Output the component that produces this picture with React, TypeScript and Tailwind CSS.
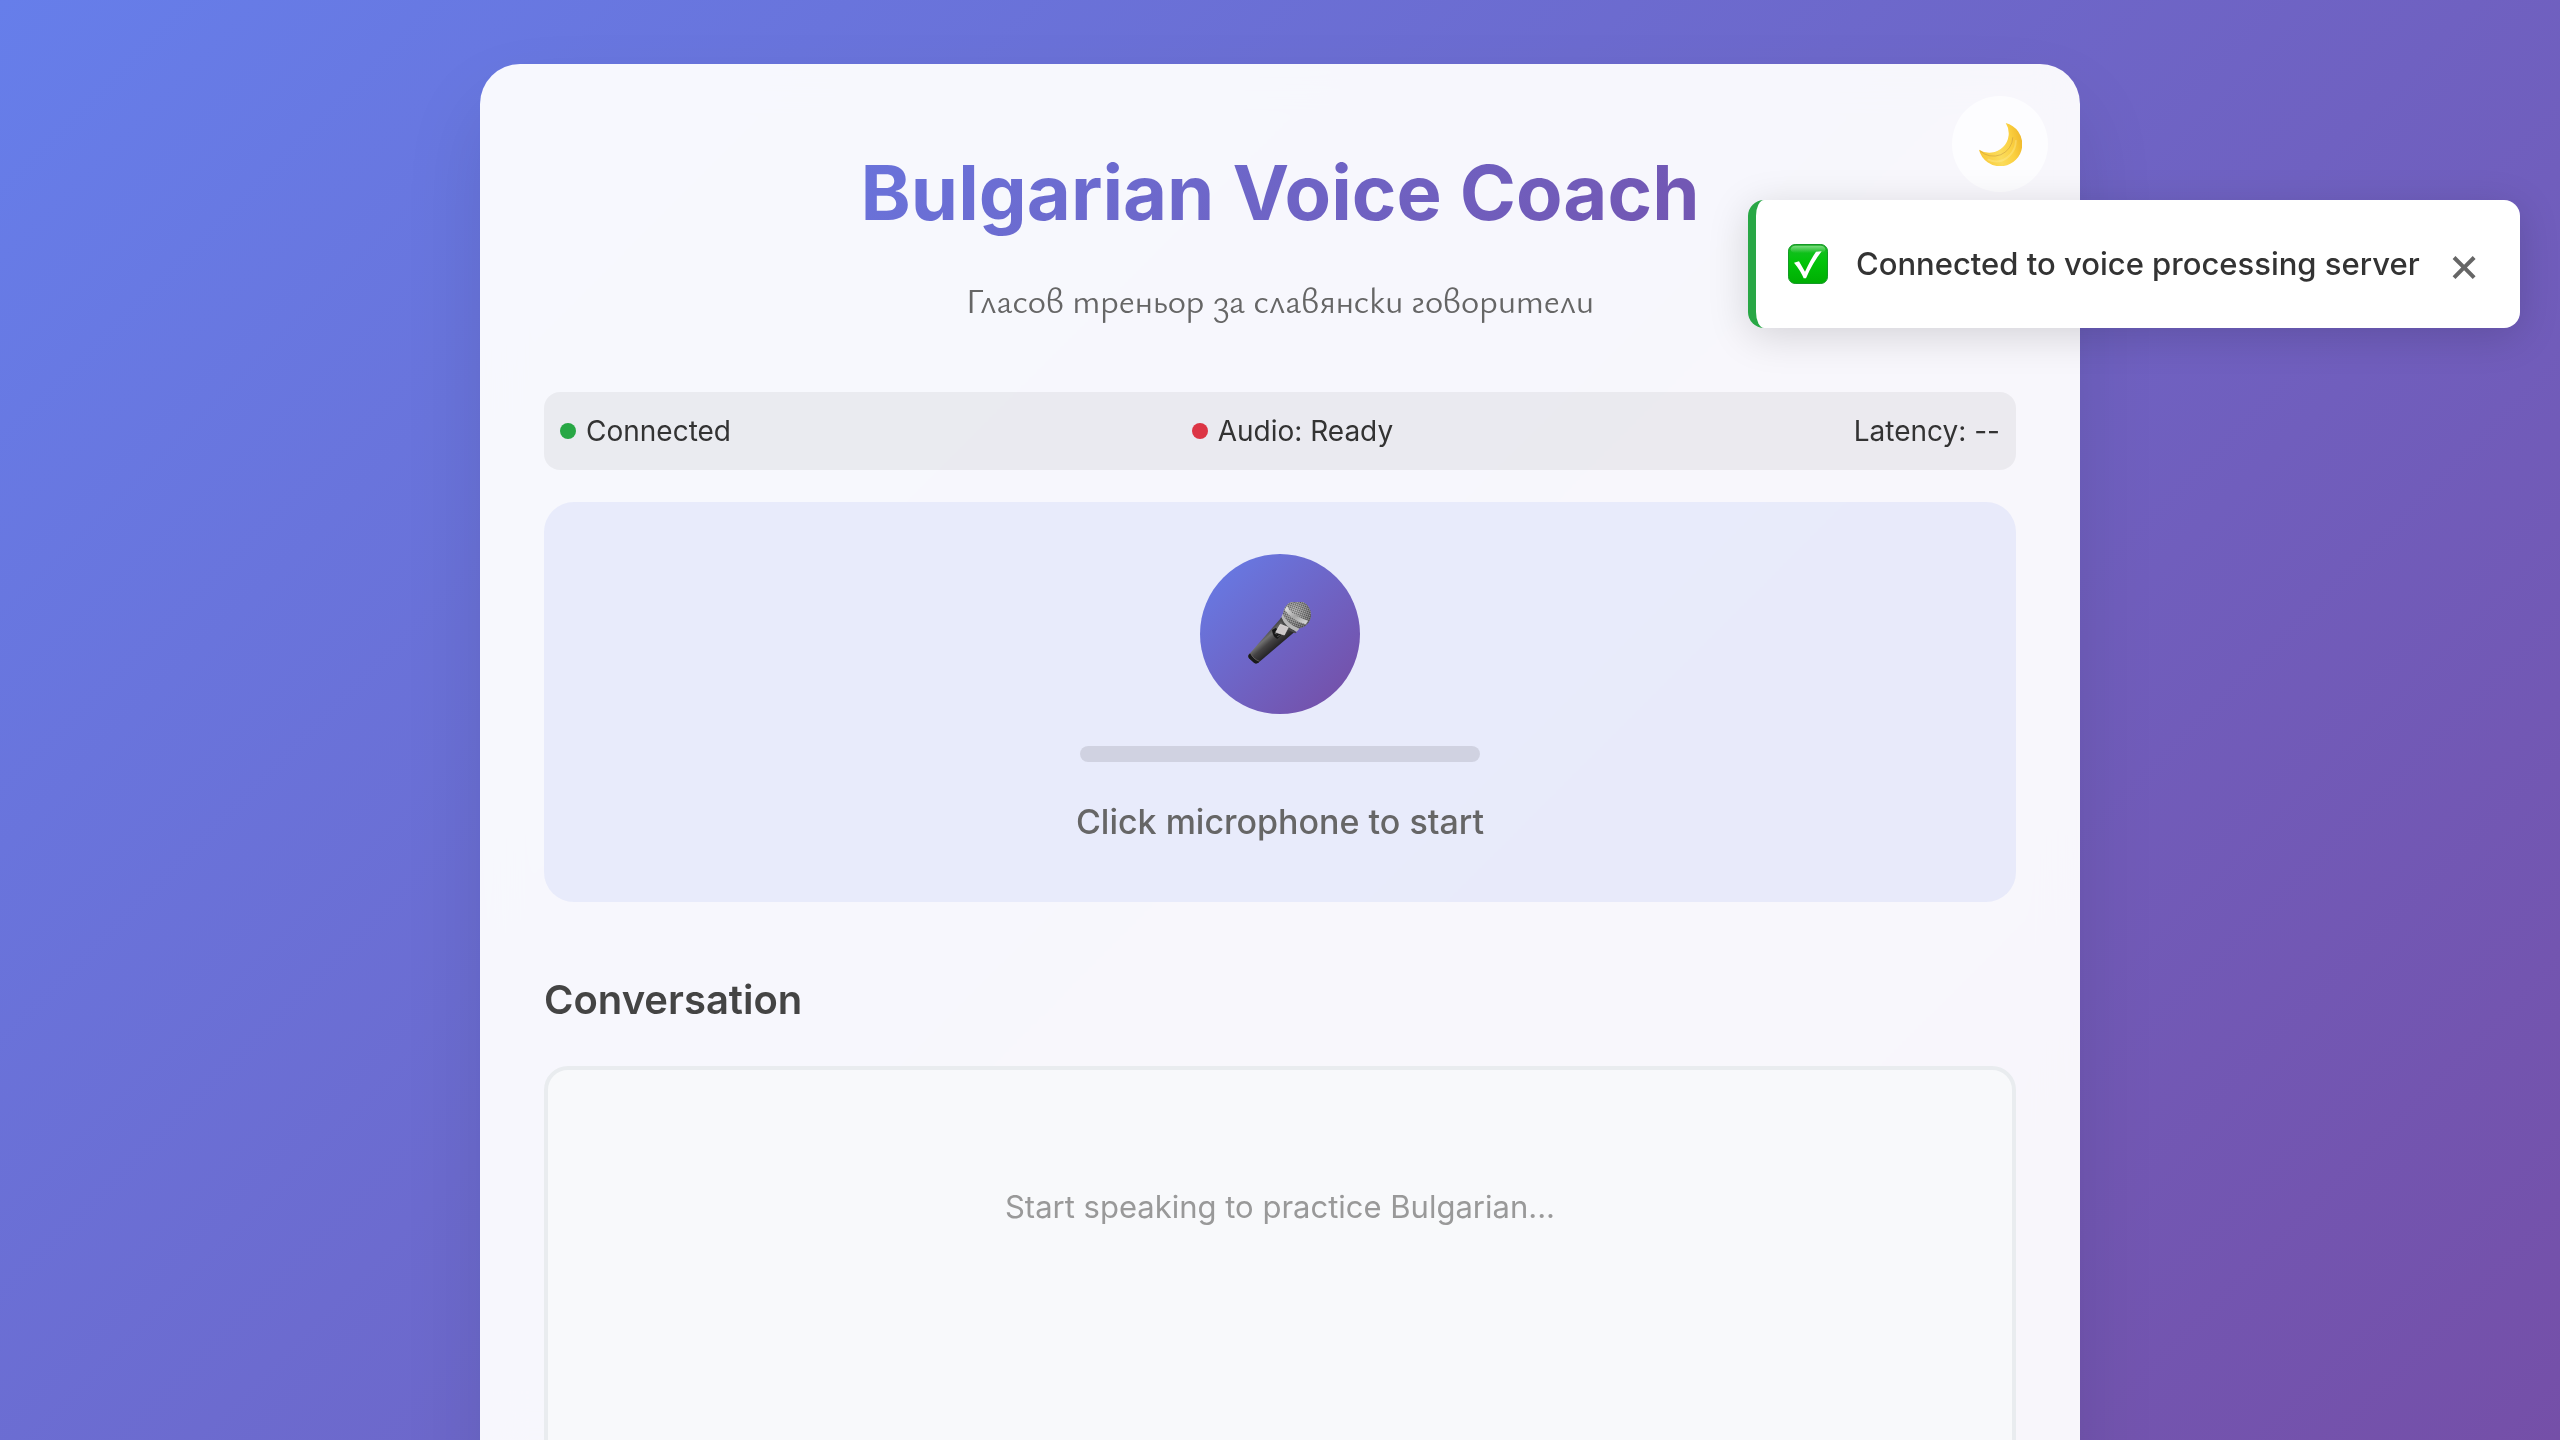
import { useState } from "react";

function MoonIcon() {
  return (
    <svg viewBox="1 1 46 46" className="size-11" aria-hidden="true">
      <defs>
        <linearGradient id="moon-body" x1="0" y1="0.6" x2="1" y2="0.4">
          <stop offset="0" stopColor="#f9c938" />
          <stop offset="0.45" stopColor="#fbdc5c" />
          <stop offset="0.75" stopColor="#fbd040" />
          <stop offset="1" stopColor="#f0b92c" />
        </linearGradient>
      </defs>
      <path d="M30 2 A23 23 0 1 1 2 30 A20.3 20.3 0 0 0 30 2Z" fill="url(#moon-body)" />
      <path d="M3 31 A20.3 20.3 0 0 0 37.400 17" fill="none" stroke="#b98a3c" strokeOpacity="0.45" strokeWidth="1" />
      <path d="M11 40 Q24 46 34 36 Q41 29 40.500 20" fill="none" stroke="#fff0a0" strokeOpacity="0.35" strokeWidth="2" />
    </svg>
  );
}

function MicIcon() {
  return (
    <svg viewBox="24 66 192 192" className="size-16" aria-hidden="true">
      <defs>
        <linearGradient id="mic-handle" gradientUnits="userSpaceOnUse" x1="70" y1="165" x2="104" y2="205">
          <stop offset="0" stopColor="#4a4a4a" />
          <stop offset="0.25" stopColor="#707070" />
          <stop offset="0.55" stopColor="#454344" />
          <stop offset="1" stopColor="#262527" />
        </linearGradient>
        <radialGradient id="mic-head" cx="0.4" cy="0.35" r="0.7">
          <stop offset="0" stopColor="#acacac" />
          <stop offset="0.6" stopColor="#808080" />
          <stop offset="1" stopColor="#5c5c5c" />
        </radialGradient>
        <linearGradient id="mic-band" x1="0" y1="0" x2="1" y2="1">
          <stop offset="0" stopColor="#e8e8e8" />
          <stop offset="0.5" stopColor="#a6a6a6" />
          <stop offset="1" stopColor="#dcdcdc" />
        </linearGradient>
        <pattern id="mic-mesh" width="6" height="6" patternUnits="userSpaceOnUse" patternTransform="rotate(20)">
          <rect width="3" height="3" fill="#333333" fillOpacity="0.65" />
          <rect x="3" y="3" width="3" height="3" fill="#e6e6e6" fillOpacity="0.4" />
        </pattern>
      </defs>
      <path d="M125 112 L26 224 Q23 230 27 235 L43 249 Q48 252 55 248 L166 154Z" fill="url(#mic-handle)" />
      <path d="M26 224 Q23 230 27 235 L43 249 Q48 252 55 248 L59 244 Q40 240 31 219Z" fill="#1a1a1b" />
      <path d="M31 219 Q40 238 59 244" fill="none" stroke="#77716c" strokeWidth="2" />
      <circle cx="171" cy="104" r="42" fill="url(#mic-head)" />
      <circle cx="171" cy="104" r="42" fill="url(#mic-mesh)" />
      <path d="M141 78 Q152 103 190 117 L204 122 L197 133 Q156 121 134 89Z" fill="url(#mic-band)" />
      <path d="M128 101 Q140 131 178 146 L170 155 Q135 142 124 112Z" fill="#b7b7b7" />
      <path d="M124 112 Q134 142 170 157 L166 160 Q130 147 121 117Z" fill="#4a4a4a" />
      <path d="M96 150 L108 143 L124 164 L112 177 Q98 170 96 150Z" fill="#171717" />
      <path d="M121 133 L145 142 L133 165 L107 157Z" fill="#cdc8c9" stroke="#e6e2e2" strokeWidth="2" strokeLinejoin="round" />
      <path d="M104 160 l6 2 M112 170 l7 -4" stroke="#8a8a8a" strokeWidth="2" />
    </svg>
  );
}

function CheckIcon() {
  return (
    <svg viewBox="0 0 120 120" className="size-10 shrink-0" aria-hidden="true">
      <defs>
        <linearGradient id="check-tile" x1="0" y1="0" x2="0" y2="1">
          <stop offset="0" stopColor="#22a92b" />
          <stop offset="0.2" stopColor="#0fc01a" />
          <stop offset="0.45" stopColor="#02c30a" />
          <stop offset="1" stopColor="#00ae03" />
        </linearGradient>
        <linearGradient id="check-gloss" x1="0" y1="0" x2="0" y2="1">
          <stop offset="0" stopColor="#8be88f" stopOpacity="0.85" />
          <stop offset="1" stopColor="#8be88f" stopOpacity="0" />
        </linearGradient>
      </defs>
      <rect x="1.500" y="1.500" width="117" height="117" rx="20" fill="url(#check-tile)" stroke="#149a26" strokeWidth="3" />
      <rect x="8" y="5" width="104" height="22" rx="14" fill="url(#check-gloss)" />
      <path d="M18 56 L33 52 L51 83 Q68 46 84 23 L101 22 Q73 58 54 103 L47 103 Q38 80 18 56Z" fill="#fff" />
    </svg>
  );
}

function StatusItem({ dot, children }: { dot?: string; children: React.ReactNode }) {
  return (
    <div className="flex items-center gap-2.5">
      {dot && <span className={`size-4 rounded-full ${dot}`} />}
      <span>{children}</span>
    </div>
  );
}

function Toast({ onClose }: { onClose: () => void }) {
  return (
    <div
      role="status"
      className="fixed top-[200px] right-10 flex min-h-32 w-[772px] items-center rounded-2xl border-l-8 border-[#28a745] bg-white px-8 shadow-[0_8px_40px_rgba(0,0,0,0.15)]"
    >
      <CheckIcon />
      <span className="ml-7 flex-1 text-[31px] font-medium whitespace-nowrap text-[#333]">
        Connected to voice processing server
      </span>
      <button
        type="button"
        aria-label="Close"
        onClick={onClose}
        className="flex size-12 items-center justify-center text-[50px] leading-none text-[#666]"
      >
        ×
      </button>
    </div>
  );
}

export default function App() {
  const [toastOpen, setToastOpen] = useState(true);

  return (
    <div className="h-screen overflow-y-auto font-['Inter',sans-serif] leading-[1.6] text-[#333] [scrollbar-width:none]">
      <div className="min-h-full bg-linear-[135deg,#667eea_0%,#764ba2_100%] px-10 py-16">
        <main className="relative mx-auto max-w-[1600px] rounded-[40px] bg-white/95 p-16 shadow-[0_40px_80px_rgba(0,0,0,0.1)] backdrop-blur-[20px]">
          <button
            type="button"
            aria-label="Toggle dark mode"
            className="absolute top-8 right-8 flex size-24 items-center justify-center rounded-full bg-white/80"
          >
            <MoonIcon />
          </button>

          <header className="mb-16 text-center">
            <h1 className="mb-4 bg-linear-[135deg,#667eea_0%,#764ba2_100%] bg-clip-text text-[76px] leading-[128px] font-bold text-transparent">
              Bulgarian Voice Coach
            </h1>
            <p lang="bg" className="font-['Ysabeau','Lato',sans-serif] text-[35px] leading-[56px] text-[#666]">
              Гласов треньор за славянски говорители
            </p>
          </header>

          <div className="mb-8 flex items-center justify-between rounded-2xl bg-black/5 p-4 text-[28px] leading-[46px]">
            <StatusItem dot="bg-[#28a745]">Connected</StatusItem>
            <StatusItem dot="bg-[#dc3545]">Audio: Ready</StatusItem>
            <StatusItem>Latency: --</StatusItem>
          </div>

          <section className="mb-16 flex flex-col items-center gap-8 rounded-[30px] bg-[#667eea]/10 p-[52px]">
            <button
              type="button"
              aria-label="Start recording"
              className="flex size-40 items-center justify-center rounded-full bg-linear-[135deg,#667eea_0%,#764ba2_100%]"
            >
              <MicIcon />
            </button>
            <div className="h-4 w-[400px] rounded-full bg-black/10" />
            <p className="text-[34px] leading-[56px] font-medium text-[#666]">Click microphone to start</p>
          </section>

          <section>
            <h2 className="mb-8 text-[40px] leading-[68px] font-semibold text-[#444]">Conversation</h2>
            <div className="min-h-[600px] rounded-3xl border-4 border-[#e9ecef] bg-[#f8f9fb] p-8">
              <p className="p-20 text-center text-[31px] leading-[50px] text-[#999]">
                Start speaking to practice Bulgarian...
              </p>
            </div>
          </section>
        </main>
      </div>

      {toastOpen && <Toast onClose={() => setToastOpen(false)} />}
    </div>
  );
}
